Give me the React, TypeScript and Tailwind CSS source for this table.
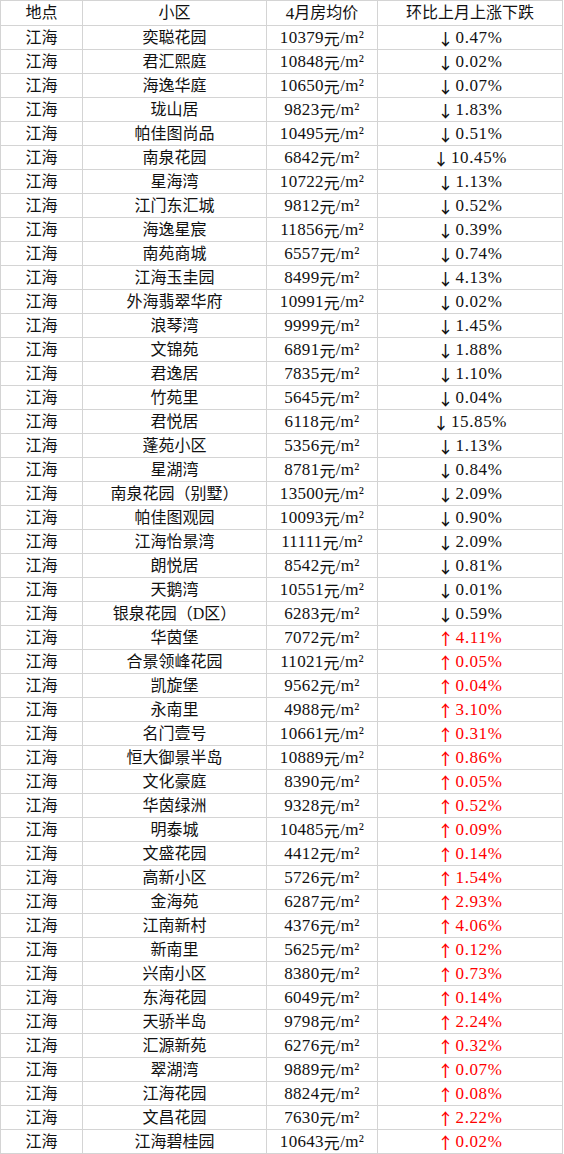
const rows: [string, number, string][] = [
  ["奕聪花园", 10379, "-0.47"],
  ["君汇熙庭", 10848, "-0.02"],
  ["海逸华庭", 10650, "-0.07"],
  ["珑山居", 9823, "-1.83"],
  ["帕佳图尚品", 10495, "-0.51"],
  ["南泉花园", 6842, "-10.45"],
  ["星海湾", 10722, "-1.13"],
  ["江门东汇城", 9812, "-0.52"],
  ["海逸星宸", 11856, "-0.39"],
  ["南苑商城", 6557, "-0.74"],
  ["江海玉圭园", 8499, "-4.13"],
  ["外海翡翠华府", 10991, "-0.02"],
  ["浪琴湾", 9999, "-1.45"],
  ["文锦苑", 6891, "-1.88"],
  ["君逸居", 7835, "-1.10"],
  ["竹苑里", 5645, "-0.04"],
  ["君悦居", 6118, "-15.85"],
  ["蓬苑小区", 5356, "-1.13"],
  ["星湖湾", 8781, "-0.84"],
  ["南泉花园（别墅）", 13500, "-2.09"],
  ["帕佳图观园", 10093, "-0.90"],
  ["江海怡景湾", 11111, "-2.09"],
  ["朗悦居", 8542, "-0.81"],
  ["天鹅湾", 10551, "-0.01"],
  ["银泉花园（D区）", 6283, "-0.59"],
  ["华茵堡", 7072, "4.11"],
  ["合景领峰花园", 11021, "0.05"],
  ["凯旋堡", 9562, "0.04"],
  ["永南里", 4988, "3.10"],
  ["名门壹号", 10661, "0.31"],
  ["恒大御景半岛", 10889, "0.86"],
  ["文化豪庭", 8390, "0.05"],
  ["华茵绿洲", 9328, "0.52"],
  ["明泰城", 10485, "0.09"],
  ["文盛花园", 4412, "0.14"],
  ["高新小区", 5726, "1.54"],
  ["金海苑", 6287, "2.93"],
  ["江南新村", 4376, "4.06"],
  ["新南里", 5625, "0.12"],
  ["兴南小区", 8380, "0.73"],
  ["东海花园", 6049, "0.14"],
  ["天骄半岛", 9798, "2.24"],
  ["汇源新苑", 6276, "0.32"],
  ["翠湖湾", 9889, "0.07"],
  ["江海花园", 8824, "0.08"],
  ["文昌花园", 7630, "2.22"],
  ["江海碧桂园", 10643, "0.02"],
];

const cell = "flex items-center justify-center border-r border-b border-[#d4d4d4] whitespace-nowrap";
const cjk = { fontFamily: '"Noto Sans CJK SC", sans-serif' };

function Row({ h, children }: { h: string; children: React.ReactNode }) {
  return <div className={`grid grid-cols-[82px_184px_111px_185px] ${h}`}>{children}</div>;
}

export default function App() {
  return (
    <div
      className="w-[564px] h-[1154px] bg-white text-[#111] text-[16px] leading-none"
      style={{ fontFamily: '"Liberation Serif", "Noto Sans CJK SC", serif' }}
    >
      <div className="w-[563px] border-l border-t border-[#d4d4d4]">
        <Row h="h-[25px]">
          <div className={cell}>地点</div>
          <div className={cell}>小区</div>
          <div className={cell}>
            <span className="text-[17px]">4</span>月房均价
          </div>
          <div className={cell}>环比上月上涨下跌</div>
        </Row>
        {rows.map(([name, price, change]) => {
          const down = change.startsWith("-");
          return (
            <Row h="h-[24px]" key={name}>
              <div className={cell}>江海</div>
              <div className={cell}>{name}</div>
              <div className={`${cell} text-[17px] tracking-[0.3px]`}>
                {price}
                <span className="text-[16px]" style={cjk}>元</span>
                /m²
              </div>
              <div className={`${cell} ${down ? "" : "text-[#ff0000]"}`}>
                <span className="font-medium" style={cjk}>{down ? "↓" : "↑"}</span>
                <span className="text-[17px] tracking-[0.6px] pl-[2px]">{down ? change.slice(1) : change}%</span>
              </div>
            </Row>
          );
        })}
      </div>
    </div>
  );
}
